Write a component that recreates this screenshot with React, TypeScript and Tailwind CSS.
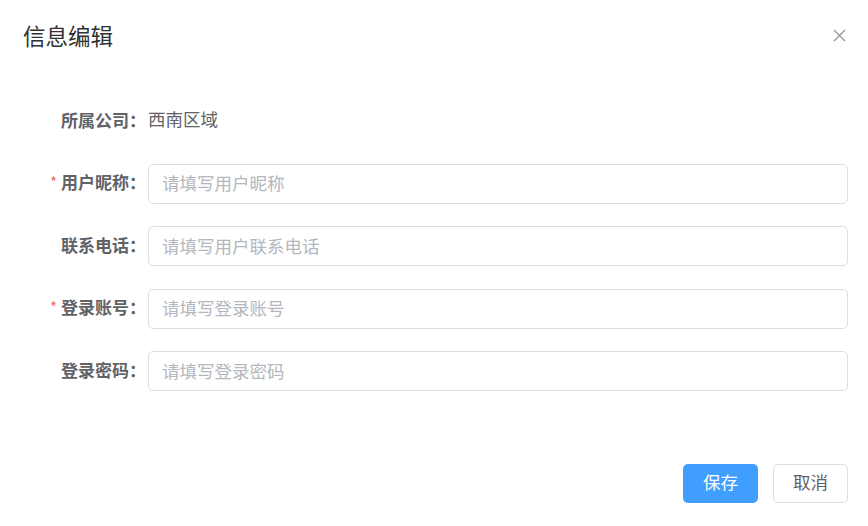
import React from "react";

const font = { fontFamily: '"Noto Sans CJK SC", "Noto Sans", sans-serif' };

function Row({
  label,
  required,
  children,
}: {
  label: string;
  required?: boolean;
  children: React.ReactNode;
}) {
  return (
    <div className="flex h-[40px] items-center">
      <div className="flex w-[128px] shrink-0 items-center justify-end pb-[3px] pr-[2px] text-[17px] font-bold text-[#606266]">
        {required && <span className="mr-[4px] text-[15px] font-normal text-[#f56c6c]">*</span>}
        <span>{label}：</span>
      </div>
      <div className="flex h-full flex-1 items-center">{children}</div>
    </div>
  );
}

function Input({ placeholder }: { placeholder: string }) {
  return (
    <input
      placeholder={placeholder}
      className="h-[40px] w-full rounded-[5px] border border-[#dcdfe6] bg-white px-[13px] pb-[2px] text-[17.5px] text-[#606266] outline-none placeholder:text-[#b4b7bd]"
      style={font}
    />
  );
}

export default function App() {
  return (
    <div className="h-[526px] w-[868px] bg-white" style={font}>
      <div className="flex items-start justify-between pl-[23px] pr-[22px] pt-[20px] pb-[13px]">
        <div className="h-[30px] text-[22.5px] leading-[30px] text-[#303133]">信息编辑</div>
        <svg width="13" height="13" viewBox="0 0 13 13" className="mt-[9px]">
          <path d="M1 1 L12 12 M12 1 L1 12" stroke="#909399" strokeWidth="1.2" fill="none" />
        </svg>
      </div>
      <div className="flex flex-col gap-[22.5px] pl-[20px] pr-[20px] pt-[38px]">
        <Row label="所属公司">
          <span className="pb-[3px] text-[17.5px] text-[#606266]">西南区域</span>
        </Row>
        <Row label="用户昵称" required>
          <Input placeholder="请填写用户昵称" />
        </Row>
        <Row label="联系电话">
          <Input placeholder="请填写用户联系电话" />
        </Row>
        <Row label="登录账号" required>
          <Input placeholder="请填写登录账号" />
        </Row>
        <Row label="登录密码">
          <Input placeholder="请填写登录密码" />
        </Row>
      </div>
      <div className="flex justify-end gap-[15px] pr-[20px] pt-[72.5px]">
        <button className="flex h-[39px] w-[75px] items-center justify-center rounded-[5px] bg-[#409eff] pb-[2px] text-[17.5px] text-white">
          保存
        </button>
        <button className="flex h-[39px] w-[75px] items-center justify-center rounded-[5px] border border-[#dcdfe6] bg-white pb-[2px] text-[17.5px] text-[#606266]">
          取消
        </button>
      </div>
    </div>
  );
}
